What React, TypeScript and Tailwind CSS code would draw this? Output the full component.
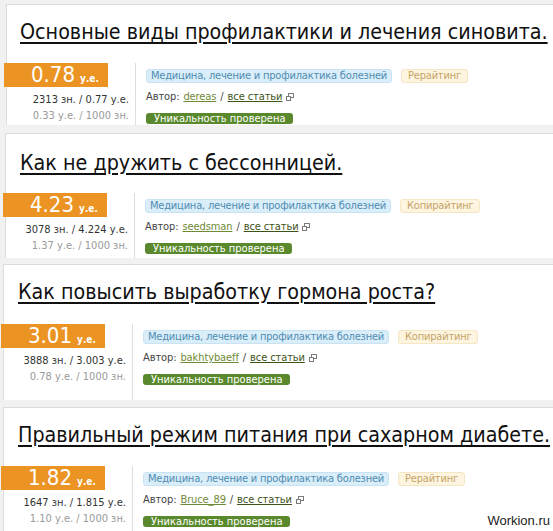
import clsx from 'clsx';

type Article = {
  id: number;
  title: string;
  price: string;
  chars: string;
  perThousand: string;
  kind: string;
  author: string;
  frame: string;
  titleBox: string;
  row: string;
};

const ARTICLES: Article[] = [
  {
    id: 1,
    title: 'Основные виды профилактики и лечения синовита.',
    price: '0.78',
    chars: '2313 зн. / 0.77 у.е.',
    perThousand: '0.33 у.е. / 1000 зн.',
    kind: 'Рерайтинг',
    author: 'dereas',
    frame: 'mt-[4px] ml-[6px] h-[121px]',
    titleBox: 'pt-[14px] pl-[13px]',
    row: 'mt-[18px]',
  },
  {
    id: 2,
    title: 'Как не дружить с бессонницей.',
    price: '4.23',
    chars: '3078 зн. / 4.224 у.е.',
    perThousand: '1.37 у.е. / 1000 зн.',
    kind: 'Копирайтинг',
    author: 'seedsman',
    frame: 'mt-[8px] ml-[5px] h-[125px]',
    titleBox: 'pt-[16px] pl-[14px]',
    row: 'mt-[17px]',
  },
  {
    id: 3,
    title: 'Как повысить выработку гормона роста?',
    price: '3.01',
    chars: '3888 зн. / 3.003 у.е.',
    perThousand: '0.78 у.е. / 1000 зн.',
    kind: 'Копирайтинг',
    author: 'bakhtybaeff',
    frame: 'mt-[6px] ml-[3px] h-[136px]',
    titleBox: 'pt-[14px] pl-[14px]',
    row: 'mt-[19px]',
  },
  {
    id: 4,
    title: 'Правильный режим питания при сахарном диабете.',
    price: '1.82',
    chars: '1647 зн. / 1.815 у.е.',
    perThousand: '1.10 у.е. / 1000 зн.',
    kind: 'Рерайтинг',
    author: 'Bruce_89',
    frame: 'mt-[7px] ml-[3px] h-[124px]',
    titleBox: 'pt-[14px] pl-[14px]',
    row: 'mt-[18px]',
  },
];

// little "opens in new window" mark after the articles link
function ExternalMark() {
  return (
    <svg width="8" height="8" viewBox="0 0 8 8" className="ml-[4px] inline-block">
      <rect x="2.5" y="0.5" width="5" height="4" fill="none" stroke="#7a7a7a" strokeWidth="1" />
      <rect x="0.5" y="3.5" width="4" height="4" fill="#fff" stroke="#7a7a7a" strokeWidth="1" />
    </svg>
  );
}

function ArticleCard({ article }: { article: Article }) {
  return (
    <article
      className={clsx(
        'flex shrink-0 flex-col border-l border-t border-[#dcdcdc] bg-white',
        article.frame
      )}
    >
      <div className={article.titleBox}>
        <h2 className="whitespace-nowrap text-[21.3px] leading-[26px] text-[#111] underline decoration-2 underline-offset-[3px]">
          {article.title}
        </h2>
      </div>

      <div className={clsx('flex flex-1', article.row)}>
        {/* price and length */}
        <div className="-ml-[3px] w-[131px] shrink-0">
          <div className="flex h-[24px] w-[104px] items-baseline bg-[#eb9423] pl-[27px] text-white">
            <span className="text-[22px] leading-[24px]">{article.price}</span>
            <span className="ml-[5px] text-[10px] font-bold">у.е.</span>
          </div>
          <div className="mt-[5px] pr-[6px] text-right text-[11px] leading-[16px]">
            <p className="text-[#333]">{article.chars}</p>
            <p className="text-[#9a9a9a]">{article.perThousand}</p>
          </div>
        </div>

        {/* tags, author, check */}
        <div className="border-l border-[#dedede] pl-[10px] text-[11px]">
          <div className="mt-[6px] flex gap-[9px] tracking-[-0.2px]">
            <span className="rounded-[3px] border border-[#c9e3f2] bg-[#daeef9] px-[4px] leading-[12px] text-[#4f8cb2]">
              Медицина, лечение и профилактика болезней
            </span>
            <span className="rounded-[3px] border border-[#f5e7c6] bg-[#fdf5e0] px-[6px] leading-[12px] text-[#c6a468]">
              {article.kind}
            </span>
          </div>
          <p className="mt-[7px] flex items-center leading-[14px] tracking-[-0.1px] text-[#444]">
            <span>Автор:</span>
            <span className="ml-[4px] text-[#6f8a36] underline">{article.author}</span>
            <span className="mx-[4px]">/</span>
            <span className="text-[#3e5318] underline">все статьи</span>
            <ExternalMark />
          </p>
          <span className="mt-[9px] block w-fit rounded-[3px] bg-[#5a892d] px-[8px] leading-[11px] text-white">
            Уникальность проверена
          </span>
        </div>
      </div>
    </article>
  );
}

export default function App() {
  return (
    <div className="relative flex h-[531px] w-[553px] flex-col overflow-hidden bg-[#f1f1f1] font-['DejaVu_Sans_Condensed','DejaVu_Sans',sans-serif] font-stretch-semi-condensed">
      {ARTICLES.map((article) => (
        <ArticleCard key={article.id} article={article} />
      ))}
      <span className="absolute bottom-[1px] right-[3px] font-['Liberation_Sans',Arial,sans-serif] font-stretch-normal text-[13px] text-[#222]">
        Workion.ru
      </span>
    </div>
  );
}
